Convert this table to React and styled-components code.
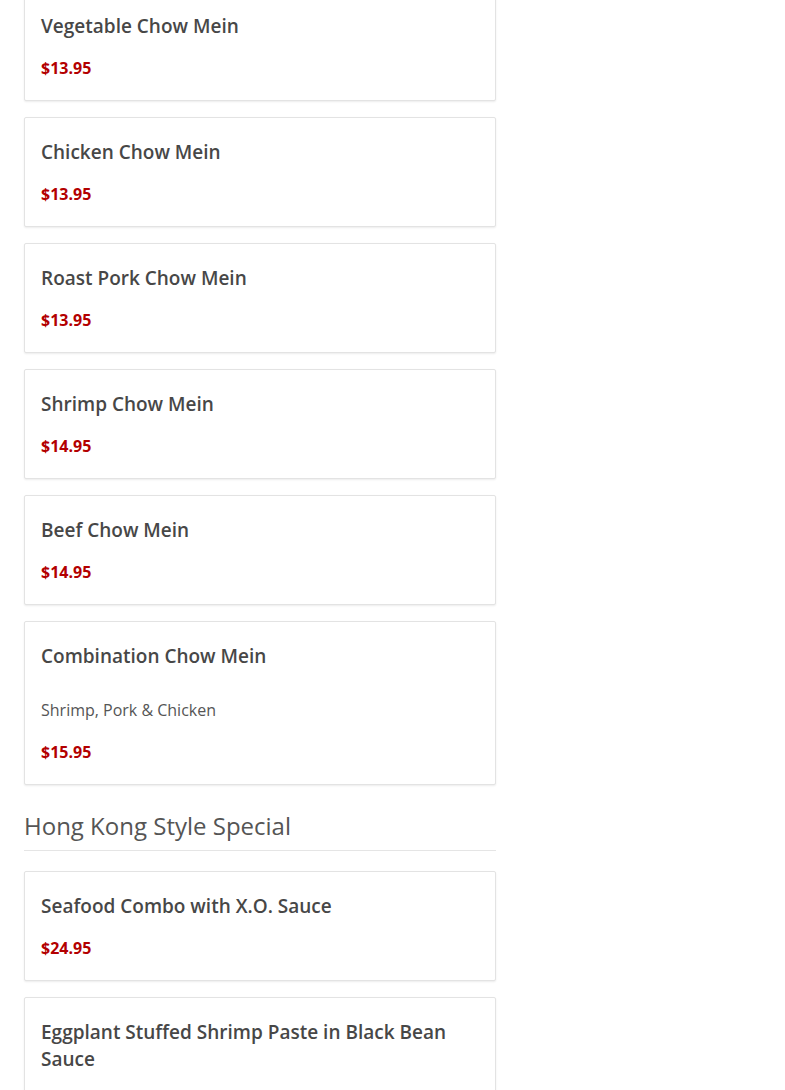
import React from "react";
import styled, { createGlobalStyle } from "styled-components";

const Global = createGlobalStyle`
  body {
    margin: 0;
    background: #fff;
    font-family: "Open Sans", "Liberation Sans", sans-serif;
  }
`;

const Page = styled.div`
  width: 472px;
  margin: -9px 0 0 24px;
`;

const Card = styled.article`
  background: white;
  border: 1px solid #e3e3e3;
  border-radius: 2px;
  box-shadow: 0 1px 2px rgba(0, 0, 0, 0.08);
  padding: 21px 16px 20px;
  margin-bottom: 16px;
`;

const Name = styled.h3`
  margin: 0 0 ${({ hasDesc }) => (hasDesc ? "29px" : "17px")};
  font-size: 19px;
  line-height: 27px;
  font-weight: 600;
  color: #474747;
`;

const Desc = styled.p`
  margin: 0 0 20px;
  font-size: 16px;
  line-height: 22px;
  color: #555;
`;

const Price = styled.div`
  font-size: 16px;
  line-height: 23px;
  font-weight: 700;
  color: #b30000;
`;

const Heading = styled.h2`
  margin: 25px 0 20px;
  padding-bottom: 8px;
  border-bottom: 1px solid #e5e5e5;
  font-size: 24px;
  line-height: 32px;
  font-weight: 400;
  color: #555;
`;

const chowMein = [
  { name: "Vegetable Chow Mein", price: "$13.95" },
  { name: "Chicken Chow Mein", price: "$13.95" },
  { name: "Roast Pork Chow Mein", price: "$13.95" },
  { name: "Shrimp Chow Mein", price: "$14.95" },
  { name: "Beef Chow Mein", price: "$14.95" },
  {
    name: "Combination Chow Mein",
    desc: "Shrimp, Pork & Chicken",
    price: "$15.95",
  },
];

const hongKong = [
  { name: "Seafood Combo with X.O. Sauce", price: "$24.95" },
  { name: "Eggplant Stuffed Shrimp Paste in Black Bean Sauce", price: "$18.95" },
];

const Item = ({ name, desc, price }) => (
  <Card>
    <Name hasDesc={!!desc}>{name}</Name>
    {desc && <Desc>{desc}</Desc>}
    <Price>{price}</Price>
  </Card>
);

export default () => (
  <>
    <Global />
    <Page>
      {chowMein.map((item) => (
        <Item key={item.name} {...item} />
      ))}
      <Heading>Hong Kong Style Special</Heading>
      {hongKong.map((item) => (
        <Item key={item.name} {...item} />
      ))}
    </Page>
  </>
);
